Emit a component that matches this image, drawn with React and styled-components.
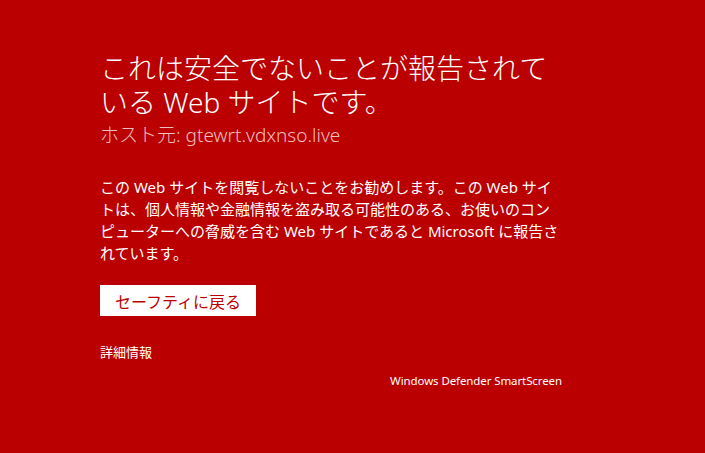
import React from "react";
import styled, { createGlobalStyle } from "styled-components";

const GlobalStyle = createGlobalStyle`
  html, body {
    margin: 0;
    padding: 0;
    background: #ba0000;
  }
  body {
    font-family: "Noto Sans", "Noto Sans CJK JP", sans-serif;
  }
`;

const Page = styled.div`
  width: 705px;
  height: 453px;
  background: #ba0000;
  color: #ffffff;
  padding: 51px 0 0 100px;
  box-sizing: border-box;
  overflow: hidden;
`;

const Content = styled.div`
  width: 462px;
  display: flex;
  flex-direction: column;
  align-items: flex-start;
`;

const Title = styled.h1`
  margin: 0;
  font-size: 28px;
  line-height: 34px;
  font-weight: 300;
`;

const Host = styled.div`
  margin-top: 3px;
  font-size: 19px;
  line-height: 26px;
  font-weight: 300;
  color: rgba(255, 255, 255, 0.75);
`;

const Message = styled.p`
  margin: 28px 0 0;
  font-size: 15px;
  line-height: 22px;
`;

const SafetyButton = styled.button`
  margin-top: 21px;
  width: 156px;
  height: 31px;
  border: none;
  background: #ffffff;
  color: #ba0000;
  font-family: inherit;
  font-size: 16px;
  padding: 0;
  cursor: pointer;
`;

const MoreInfo = styled.a`
  margin-top: 28px;
  font-size: 13px;
  line-height: 16px;
  color: #ffffff;
  text-decoration: none;
`;

const Brand = styled.div`
  align-self: stretch;
  margin-top: 13px;
  text-align: right;
  font-size: 11.5px;
  line-height: 16px;
  letter-spacing: -0.1px;
`;

export default function App() {
  return (
    <>
      <GlobalStyle />
      <Page>
        <Content>
          <Title>これは安全でないことが報告されている Web サイトです。</Title>
          <Host>ホスト元: gtewrt.vdxnso.live</Host>
          <Message>
            この Web サイトを閲覧しないことをお勧めします。この Web
            サイトは、個人情報や金融情報を盗み取る可能性のある、お使いのコンピューターへの脅威を含む
            Web サイトであると Microsoft に報告されています。
          </Message>
          <SafetyButton>セーフティに戻る</SafetyButton>
          <MoreInfo href="#">詳細情報</MoreInfo>
          <Brand>Windows Defender SmartScreen</Brand>
        </Content>
      </Page>
    </>
  );
}
